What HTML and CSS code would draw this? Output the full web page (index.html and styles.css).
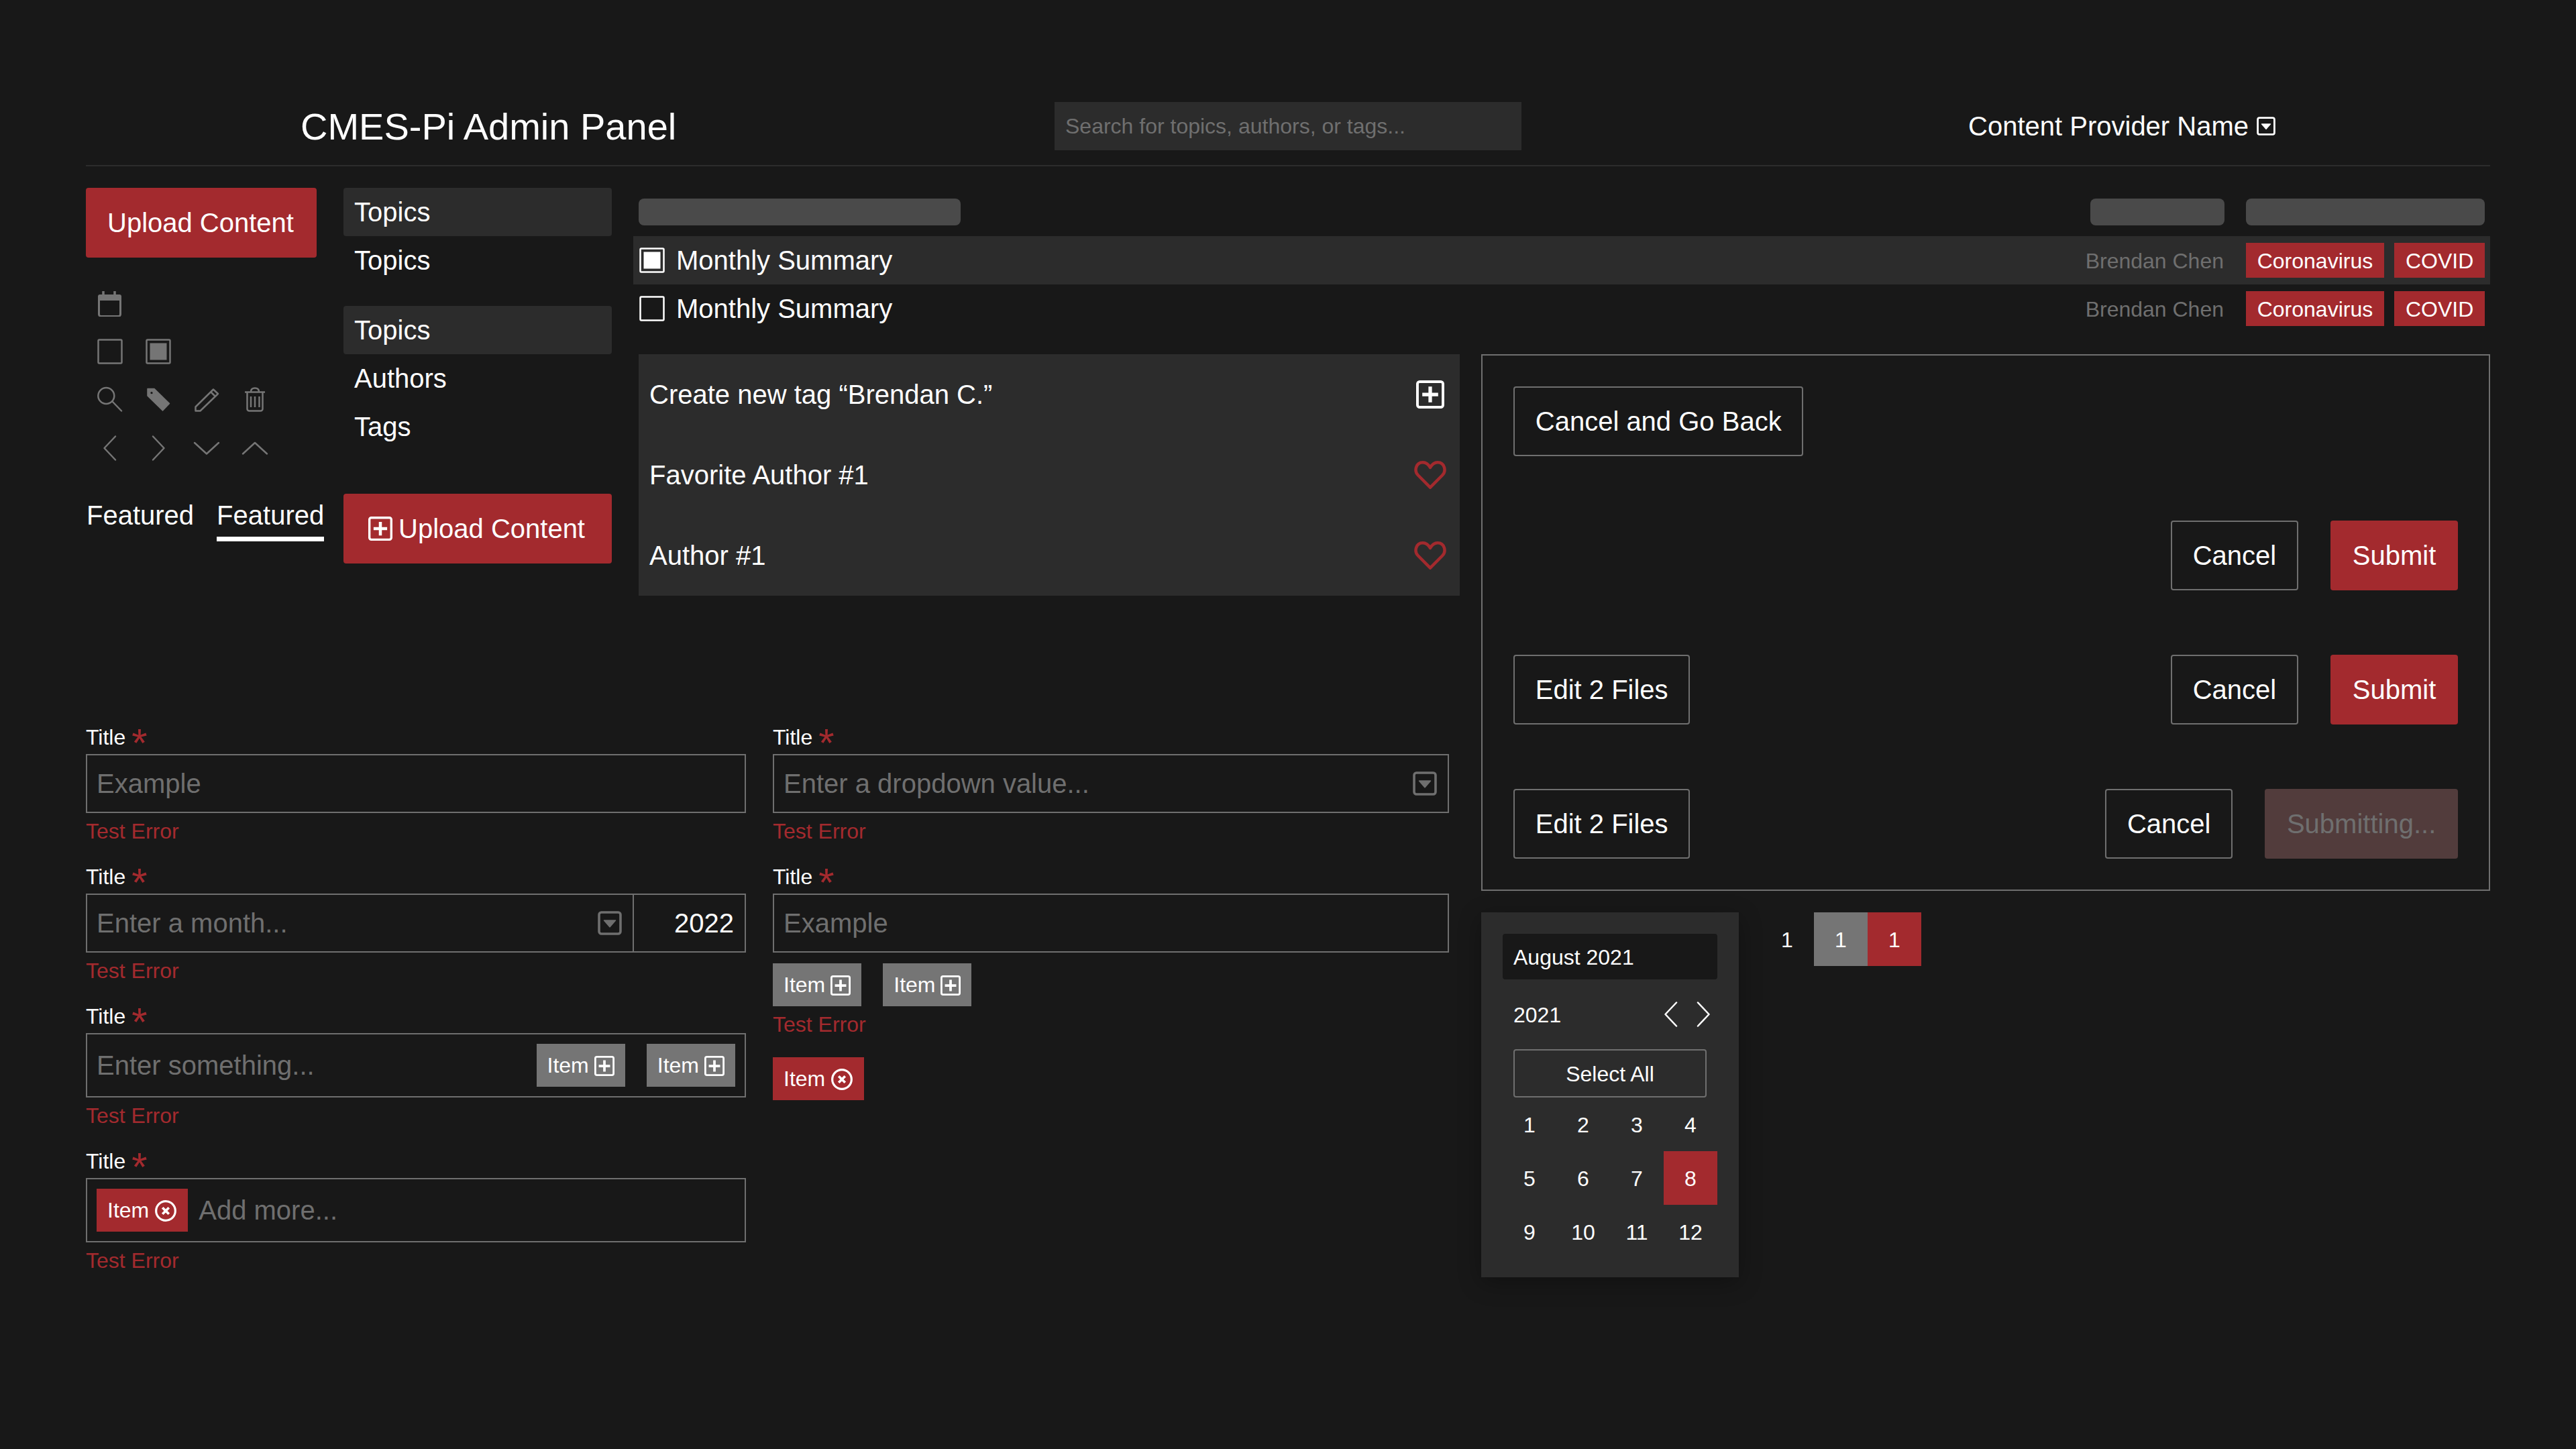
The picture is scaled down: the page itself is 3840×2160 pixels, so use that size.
FILE: index.html
```html
<!DOCTYPE html>
<html lang="en">
<head>
<meta charset="UTF-8" />
<meta name="viewport" content="width=device-width, initial-scale=1" />
<title>CMES-Pi Admin Panel</title>
<link rel="stylesheet" href="styles.css">
</head>
<body>

<svg class="sprite" xmlns="http://www.w3.org/2000/svg">
  <symbol id="i-calendar" viewBox="0 0 40 40">
    <path d="M10 2v6M27 2v6" fill="none" stroke="currentColor" stroke-width="3.5"/>
    <path d="M5 7h29a3 3 0 0 1 3 3v6H2v-6a3 3 0 0 1 3-3z" fill="currentColor"/>
    <rect x="3.5" y="8.500" width="32" height="31" rx="3" fill="none" stroke="currentColor" stroke-width="3"/>
  </symbol>
  <symbol id="i-box" viewBox="0 0 40 40">
    <rect x="2.500" y="2.500" width="35" height="35" rx="1.500" fill="none" stroke="currentColor" stroke-width="2.500"/>
  </symbol>
  <symbol id="i-box-on" viewBox="0 0 40 40">
    <rect x="2.500" y="2.500" width="35" height="35" rx="1.500" fill="none" stroke="currentColor" stroke-width="2.500"/>
    <rect x="7.500" y="7.500" width="25" height="25" fill="currentColor"/>
  </symbol>
  <symbol id="i-search" viewBox="0 0 40 40">
    <circle cx="14.300" cy="14" r="12" fill="none" stroke="currentColor" stroke-width="2.500"/>
    <path d="M23.500 22.500L37 36.500" fill="none" stroke="currentColor" stroke-width="2.500" stroke-linecap="round"/>
  </symbol>
  <symbol id="i-tag" viewBox="0 0 40 40">
    <path fill-rule="evenodd" fill="currentColor" stroke="currentColor" stroke-width="1.500" stroke-linejoin="round" d="M4 3.500h10L36.500 25.500 26.500 36 4 14zM10 7.300a2.400 2.400 0 1 0 0 4.800 2.400 2.400 0 0 0 0-4.800z"/>
  </symbol>
  <symbol id="i-pencil" viewBox="0 0 40 40">
    <path d="M3.500 30.500L30 4.500l7 6.500-26.500 25.500h-7zM26 8l7 7" fill="none" stroke="currentColor" stroke-width="2.500" stroke-linejoin="round"/>
  </symbol>
  <symbol id="i-trash" viewBox="0 0 40 40">
    <path d="M5 8.500h30M14 8c0-4 2.500-5.500 6-5.500s6 1.500 6 5.500M8.500 9v24.500a3 3 0 0 0 3 3h17a3 3 0 0 0 3-3V9M14 15v16M20 15v16M26.500 15v16" fill="none" stroke="currentColor" stroke-width="2.500"/>
  </symbol>
  <symbol id="i-left" viewBox="0 0 40 40">
    <path d="M28 2.500L11.500 20 28 37.500" fill="none" stroke="currentColor" stroke-width="2.500" stroke-linecap="round" stroke-linejoin="round"/>
  </symbol>
  <symbol id="i-right" viewBox="0 0 40 40">
    <path d="M12 2.500L28.500 20 12 37.500" fill="none" stroke="currentColor" stroke-width="2.500" stroke-linecap="round" stroke-linejoin="round"/>
  </symbol>
  <symbol id="i-down" viewBox="0 0 40 40">
    <path d="M2 12l18 16.500L38 12" fill="none" stroke="currentColor" stroke-width="2.500" stroke-linecap="round" stroke-linejoin="round"/>
  </symbol>
  <symbol id="i-up" viewBox="0 0 40 40">
    <path d="M2 28.500L20 12l18 16.500" fill="none" stroke="currentColor" stroke-width="2.500" stroke-linecap="round" stroke-linejoin="round"/>
  </symbol>
  <symbol id="i-plus" viewBox="0 0 32 32">
    <rect x="1.500" y="1.500" width="29" height="29" rx="2.500" fill="none" stroke="currentColor" stroke-width="3"/>
    <path d="M16 7v18M7 16h18" fill="none" stroke="currentColor" stroke-width="4"/>
  </symbol>
  <symbol id="i-drop" viewBox="0 0 32 32">
    <rect x="1.800" y="1.800" width="28.400" height="28.400" rx="3" fill="none" stroke="currentColor" stroke-width="3.200"/>
    <path d="M8.500 12.500h15L16 21z" fill="currentColor" stroke="currentColor" stroke-width="1.500" stroke-linejoin="round"/>
  </symbol>
  <symbol id="i-close" viewBox="0 0 32 32">
    <circle cx="16" cy="16" r="13.500" fill="none" stroke="currentColor" stroke-width="3"/>
    <path d="M11.500 11.500l9 9M20.500 11.500l-9 9" fill="none" stroke="currentColor" stroke-width="3.500"/>
  </symbol>
  <symbol id="i-heart" viewBox="0 0 48 42">
    <path d="M24 39.700L6 21.500C-.5 15 2.500 2.300 13 2.300c5 0 8.500 3.200 11 7.700 2.500-4.500 6-7.700 11-7.700 10.500 0 13.500 12.700 7 19.200z" fill="none" stroke="currentColor" stroke-width="4.500" stroke-linejoin="round"/>
  </symbol>
</svg>

<header class="topbar">
  <h1 class="brand">CMES-Pi Admin Panel</h1>
  <input class="search" type="text" placeholder="Search for topics, authors, or tags..." />
  <div class="account">
    <span>Content Provider Name</span>
    <svg class="ico-account"><use href="#i-drop"/></svg>
  </div>
</header>

<main class="board">

  <div class="side">
    <div class="rail">
      <button class="btn btn-red btn-rail">Upload Content</button>

      <div class="icon-grid">
        <svg><use href="#i-calendar"/></svg>
        <span></span><span></span><span></span>
        <svg><use href="#i-box"/></svg>
        <svg><use href="#i-box-on"/></svg>
        <span></span><span></span>
        <svg><use href="#i-search"/></svg>
        <svg><use href="#i-tag"/></svg>
        <svg><use href="#i-pencil"/></svg>
        <svg><use href="#i-trash"/></svg>
        <svg><use href="#i-left"/></svg>
        <svg><use href="#i-right"/></svg>
        <svg><use href="#i-down"/></svg>
        <svg><use href="#i-up"/></svg>
      </div>

      <div class="tabs">
        <a class="tab">Featured</a>
        <a class="tab tab-on">Featured</a>
      </div>
    </div>

    <nav class="nav">
      <div class="nav-group">
        <a class="nav-item nav-on">Topics</a>
        <a class="nav-item">Topics</a>
      </div>
      <div class="nav-group">
        <a class="nav-item nav-on">Topics</a>
        <a class="nav-item">Authors</a>
        <a class="nav-item">Tags</a>
      </div>
      <button class="btn btn-red btn-wide">
        <svg class="ico-upload"><use href="#i-plus"/></svg>
        Upload Content
      </button>
    </nav>
  </div>

  <section class="list">
    <div class="list-head">
      <div class="skeleton sk-title"></div>
      <div class="skeleton sk-author"></div>
      <div class="skeleton sk-tags"></div>
    </div>
    <div class="list-row list-row-on">
      <svg class="ico-check"><use href="#i-box-on"/></svg>
      <span class="list-title">Monthly Summary</span>
      <span class="list-author">Brendan Chen</span>
      <div class="list-tags">
        <span class="tag">Coronavirus</span>
        <span class="tag">COVID</span>
      </div>
    </div>
    <div class="list-row">
      <svg class="ico-check"><use href="#i-box"/></svg>
      <span class="list-title">Monthly Summary</span>
      <span class="list-author">Brendan Chen</span>
      <div class="list-tags">
        <span class="tag">Coronavirus</span>
        <span class="tag">COVID</span>
      </div>
    </div>
  </section>

  <section class="suggest">
    <div class="suggest-row">
      <span>Create new tag “Brendan C.”</span>
      <svg class="ico-add"><use href="#i-plus"/></svg>
    </div>
    <div class="suggest-row">
      <span>Favorite Author #1</span>
      <svg class="ico-heart"><use href="#i-heart"/></svg>
    </div>
    <div class="suggest-row">
      <span>Author #1</span>
      <svg class="ico-heart"><use href="#i-heart"/></svg>
    </div>
  </section>

  <section class="forms">
    <div class="form-col form-col-left">
      <div class="field">
        <label class="field-label">Title <span class="req">*</span></label>
        <div class="control"><input class="control-input" type="text" placeholder="Example" /></div>
        <div class="field-error">Test Error</div>
      </div>

      <div class="field">
        <label class="field-label">Title <span class="req">*</span></label>
        <div class="control">
          <input class="control-input" type="text" placeholder="Enter a month..." />
          <svg class="ico-select"><use href="#i-drop"/></svg>
          <div class="control-year">2022</div>
        </div>
        <div class="field-error">Test Error</div>
      </div>

      <div class="field">
        <label class="field-label">Title <span class="req">*</span></label>
        <div class="control control-tall">
          <input class="control-input" type="text" placeholder="Enter something..." />
          <div class="chips">
            <span class="chip">Item <svg class="ico-chip"><use href="#i-plus"/></svg></span>
            <span class="chip">Item <svg class="ico-chip"><use href="#i-plus"/></svg></span>
          </div>
        </div>
        <div class="field-error">Test Error</div>
      </div>

      <div class="field">
        <label class="field-label">Title <span class="req">*</span></label>
        <div class="control control-tall control-tags">
          <span class="chip chip-red">Item <svg class="ico-chip-x"><use href="#i-close"/></svg></span>
          <input class="control-input" type="text" placeholder="Add more..." />
        </div>
        <div class="field-error">Test Error</div>
      </div>
    </div>

    <div class="form-col form-col-right">
      <div class="field">
        <label class="field-label">Title <span class="req">*</span></label>
        <div class="control">
          <input class="control-input" type="text" placeholder="Enter a dropdown value..." />
          <svg class="ico-select"><use href="#i-drop"/></svg>
        </div>
        <div class="field-error">Test Error</div>
      </div>

      <div class="field field-chips">
        <label class="field-label">Title <span class="req">*</span></label>
        <div class="control"><input class="control-input" type="text" placeholder="Example" /></div>
        <div class="chips chips-below">
          <span class="chip">Item <svg class="ico-chip"><use href="#i-plus"/></svg></span>
          <span class="chip">Item <svg class="ico-chip"><use href="#i-plus"/></svg></span>
        </div>
        <div class="field-error">Test Error</div>
      </div>

      <span class="chip chip-red">Item <svg class="ico-chip-x"><use href="#i-close"/></svg></span>
    </div>
  </section>

  <div class="aside">
    <section class="actions">
      <div class="actions-row">
        <button class="btn btn-line">Cancel and Go Back</button>
      </div>
      <div class="actions-row actions-end">
        <button class="btn btn-line">Cancel</button>
        <button class="btn btn-red">Submit</button>
      </div>
      <div class="actions-row">
        <button class="btn btn-line">Edit 2 Files</button>
        <div class="actions-group">
          <button class="btn btn-line">Cancel</button>
          <button class="btn btn-red">Submit</button>
        </div>
      </div>
      <div class="actions-row">
        <button class="btn btn-line">Edit 2 Files</button>
        <div class="actions-group">
          <button class="btn btn-line">Cancel</button>
          <button class="btn btn-busy">Submitting...</button>
        </div>
      </div>
    </section>

    <div class="aside-bottom">
      <section class="picker">
        <div class="picker-value">August 2021</div>
        <div class="picker-year">
          <span class="picker-year-text">2021</span>
          <div class="picker-arrows">
            <svg><use href="#i-left"/></svg>
            <svg><use href="#i-right"/></svg>
          </div>
        </div>
        <div class="picker-all">Select All</div>
        <div class="picker-grid">
          <span class="cell">1</span><span class="cell">2</span><span class="cell">3</span><span class="cell">4</span>
          <span class="cell">5</span><span class="cell">6</span><span class="cell">7</span><span class="cell cell-red">8</span>
          <span class="cell">9</span><span class="cell">10</span><span class="cell">11</span><span class="cell">12</span>
        </div>
      </section>

      <div class="pager">
        <span class="cell">1</span>
        <span class="cell cell-gray">1</span>
        <span class="cell cell-red">1</span>
      </div>
    </div>
  </div>

</main>

</body>
</html>
```

FILE: styles.css
```css
html, body {
  margin: 0;
  padding: 0;
  background: #181818;
  color: #fff;
  font-family: "Liberation Sans", Arial, sans-serif;
  font-size: 40px;
}
body {
  min-height: 2160px;
  padding: 152px 128px 0;
  box-sizing: border-box;
}
.sprite { display: none; }
input {
  font-family: inherit;
  color: #fff;
  background: none;
  border: 0;
  outline: none;
  padding: 0;
}
input::placeholder { color: #6f6f6f; opacity: 1; }

/* header */
.topbar {
  display: flex;
  align-items: center;
  padding-bottom: 22px;
  border-bottom: 2px solid #2c2c2c;
}
.brand {
  width: 1444px;
  box-sizing: border-box;
  margin: 0;
  padding-left: 320px;
  font-size: 56px;
  font-weight: 400;
}
.search {
  width: 696px;
  height: 72px;
  box-sizing: border-box;
  padding: 0 16px;
  background: #2c2c2c;
  font-size: 32px;
}
.account {
  flex: 1;
  display: flex;
  justify-content: flex-end;
  align-items: center;
  gap: 12px;
  padding-right: 320px;
}
.ico-account { width: 28px; height: 28px; }

/* page grid */
.board {
  display: grid;
  grid-template-columns: 824px 1224px 1536px;
  grid-template-rows: 248px 360px auto;
  margin-top: 32px;
}
.side {
  grid-column: 1;
  grid-row: 1 / span 2;
  display: flex;
  gap: 40px;
}
.list { grid-column: 2 / span 2; grid-row: 1; margin-left: -8px; }
.suggest { grid-column: 2; grid-row: 2; }
.forms { grid-column: 1 / span 2; grid-row: 3; }
.aside { grid-column: 3; grid-row: 2 / span 2; margin-left: 32px; }

/* buttons */
.btn {
  height: 104px;
  padding: 0 32.75px;
  box-sizing: border-box;
  border: 0;
  border-radius: 4px;
  font: inherit;
  color: #fff;
  white-space: nowrap;
}
.btn-red { background: #a32a2e; }
.btn-line { padding: 0 30.75px; background: none; border: 2px solid #6f6f6f; }
.btn-busy { background: #523c3c; color: #6f6f6f; }
.btn-rail { width: 344px; padding: 0 32px; text-align: left; }
.btn-wide {
  width: 400px;
  display: flex;
  justify-content: center;
  align-items: center;
  gap: 9px;
  margin-top: 64px;
  padding: 0 3px 0 0;
}
.ico-upload { width: 36px; height: 36px; }

/* left rail */
.rail { width: 344px; }
.icon-grid {
  display: grid;
  grid-template-columns: repeat(4, 72px);
  grid-auto-rows: 72px;
  margin-top: 32px;
  color: #757575;
}
.icon-grid svg {
  width: 40px;
  height: 40px;
  margin: 16px;
}
.tabs {
  display: flex;
  gap: 34px;
  margin-top: 40px;
  padding-left: 1px;
}
.tab {
  padding-bottom: 8px;
  border-bottom: 7px solid transparent;
  line-height: 48px;
}
.tab-on { border-bottom-color: #fff; }

/* nav column */
.nav { width: 400px; }
.nav-group { margin-bottom: 32px; }
.nav-group + .nav-group { margin-bottom: 0; }
.nav-item {
  display: block;
  height: 72px;
  padding: 0 16px;
  border-radius: 4px;
  line-height: 72px;
}
.nav-on { background: #2c2c2c; }

/* summary list */
.list-head {
  display: flex;
  gap: 32px;
  margin-top: 16px;
  margin-bottom: 16px;
  padding: 0 8px;
}
.skeleton { height: 40px; border-radius: 8px; background: #4a4a4a; }
.sk-title { width: 480px; margin-right: auto; }
.sk-author { width: 200px; }
.sk-tags { width: 356px; }
.list-row {
  display: flex;
  align-items: center;
  height: 72px;
  padding: 0 8px;
}
.list-row-on { background: #2c2c2c; }
.ico-check { width: 40px; height: 40px; margin-right: 16px; }
.list-title { flex: 1; }
.list-author { color: #6f6f6f; font-size: 32px; line-height: 40px; padding-top: 2px; margin-right: 33px; }
.list-tags { width: 356px; display: flex; justify-content: space-between; }
.tag {
  height: 52px;
  padding: 0 16.7px;
  background: #a32a2e;
  font-size: 32px;
  line-height: 54px;
}

/* suggestions */
.suggest { height: 360px; background: #2c2c2c; }
.suggest-row {
  display: flex;
  justify-content: space-between;
  align-items: center;
  height: 120px;
  padding: 0 20px 0 16px;
}
.ico-add { width: 42px; height: 42px; margin-right: 3px; }
.ico-heart { width: 48px; height: 42px; color: #a32a2e; }

/* forms */
.forms {
  display: flex;
  gap: 40px;
  margin-top: 196px;
  padding-right: 16px;
}
.form-col-left { width: 984px; }
.form-col-right { width: 1008px; }
.field { margin-bottom: 32px; }
.field-chips { margin-bottom: 28px; }
.field-label {
  display: block;
  height: 32px;
  margin-bottom: 8px;
  font-size: 32px;
  line-height: 30px;
}
.req {
  color: #a32a2e;
  font-size: 60px;
  line-height: 0;
  vertical-align: -18px;
}
.control {
  display: flex;
  align-items: center;
  height: 88px;
  box-sizing: border-box;
  padding-left: 14px;
  border: 2px solid #6f6f6f;
}
.control-tall { height: 96px; padding-right: 14px; }
.control-tags { gap: 16px; }
.control-input {
  flex: 1;
  min-width: 0;
  font-size: 40px;
}
.ico-select {
  width: 36px;
  height: 36px;
  margin-right: 16px;
  color: #6f6f6f;
}
.control-year {
  width: 167px;
  height: 100%;
  box-sizing: border-box;
  padding-right: 16px;
  border-left: 2px solid #6f6f6f;
  text-align: right;
  line-height: 84px;
}
.field-error {
  height: 40px;
  margin-top: 8px;
  color: #a32a2e;
  font-size: 32px;
  line-height: 38px;
}
.chips { display: flex; gap: 32px; }
.chips-below { margin-top: 16px; }
.chip {
  display: inline-flex;
  align-items: center;
  gap: 8px;
  height: 64px;
  box-sizing: border-box;
  padding: 1px 16px 0;
  background: #757575;
  font-size: 32px;
}
.chip-red { background: #a32a2e; }
.ico-chip { width: 30px; height: 30px; }
.ico-chip-x { width: 34px; height: 34px; }

/* action panel */
.actions {
  display: flex;
  flex-direction: column;
  gap: 96px;
  height: 800px;
  box-sizing: border-box;
  padding: 46px;
  border: 2px solid #6f6f6f;
}
.actions-row { display: flex; justify-content: space-between; }
.actions-end { justify-content: flex-end; gap: 48px; }
.actions-group { display: flex; gap: 48px; }

/* month picker + pager */
.aside-bottom { display: flex; gap: 32px; margin-top: 32px; }
.picker {
  width: 384px;
  height: 544px;
  box-sizing: border-box;
  padding: 32px;
  background: #2c2c2c;
  box-shadow: 0 8px 32px rgba(0, 0, 0, 0.3);
  font-size: 32px;
}
.picker-value {
  height: 68px;
  padding: 0 16px;
  border-radius: 4px;
  background: #181818;
  line-height: 70px;
}
.picker-year {
  display: flex;
  justify-content: space-between;
  align-items: center;
  height: 72px;
  margin-top: 16px;
  padding-left: 16px;
}
.picker-year-text { padding-top: 2px; }
.picker-arrows { display: flex; gap: 8px; height: 40px; margin-right: 1px; }
.picker-arrows svg { width: 40px; height: 40px; }
.picker-all {
  width: 288px;
  height: 72px;
  box-sizing: border-box;
  margin: 16px 0 0 16px;
  border: 2px solid #6f6f6f;
  border-radius: 4px;
  text-align: center;
  line-height: 70px;
}
.picker-grid { display: grid; grid-template-columns: repeat(4, 80px); }
.cell {
  width: 80px;
  height: 80px;
  font-size: 32px;
  line-height: 82px;
  text-align: center;
}
.cell-red { background: #a32a2e; }
.cell-gray { background: #757575; }
.pager { display: flex; height: 80px; }
```
